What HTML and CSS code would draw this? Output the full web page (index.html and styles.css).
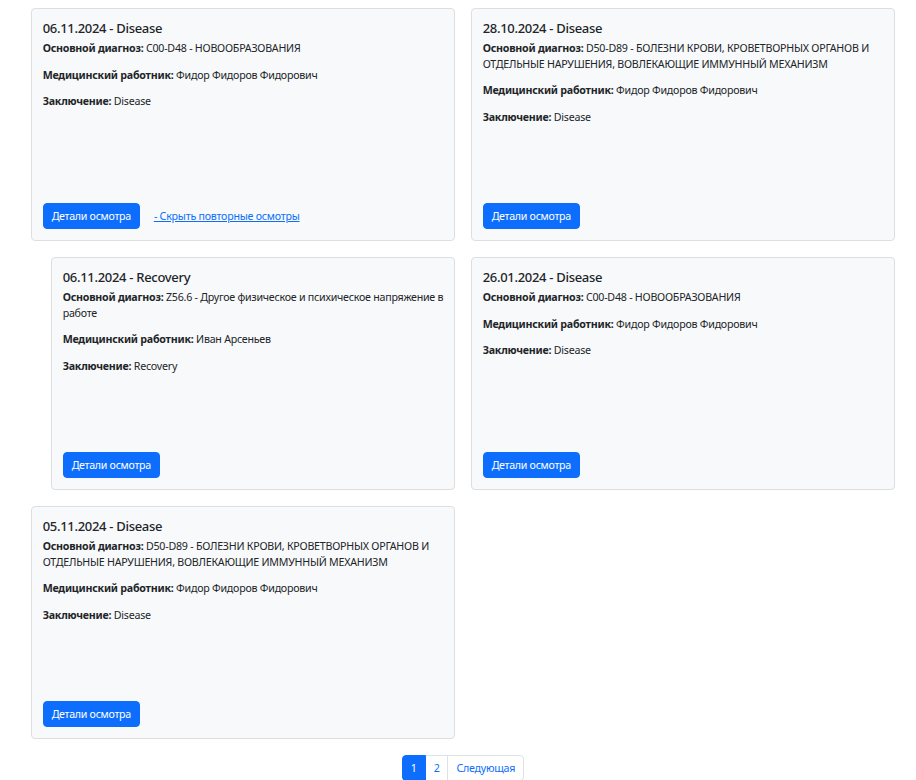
FILE: index.html
```html
<!DOCTYPE html>
<html lang="ru">
<head>
<meta charset="utf-8">
<title>Осмотры</title>
<link rel="stylesheet" href="styles.css">
</head>
<body>
<div class="page">
  <div class="grid">
    <div class="cell">
      <div class="card">
        <h5 class="card-title">06.11.2024 - Disease</h5>
        <p><strong>Основной диагноз:</strong> C00-D48 - НОВООБРАЗОВАНИЯ</p>
        <p><strong>Медицинский работник:</strong> Фидор Фидоров Фидорович</p>
        <p><strong>Заключение:</strong> Disease</p>
        <div class="card-actions">
          <a class="btn" href="#">Детали осмотра</a>
          <a class="btn-link" href="#">- Скрыть повторные осмотры</a>
        </div>
      </div>
    </div>
    <div class="cell">
      <div class="card">
        <h5 class="card-title">28.10.2024 - Disease</h5>
        <p><strong>Основной диагноз:</strong> D50-D89 - БОЛЕЗНИ КРОВИ, КРОВЕТВОРНЫХ ОРГАНОВ И ОТДЕЛЬНЫЕ НАРУШЕНИЯ, ВОВЛЕКАЮЩИЕ ИММУННЫЙ МЕХАНИЗМ</p>
        <p><strong>Медицинский работник:</strong> Фидор Фидоров Фидорович</p>
        <p><strong>Заключение:</strong> Disease</p>
        <div class="card-actions">
          <a class="btn" href="#">Детали осмотра</a>
        </div>
      </div>
    </div>
    <div class="cell nested">
      <div class="card">
        <h5 class="card-title">06.11.2024 - Recovery</h5>
        <p><strong>Основной диагноз:</strong> Z56.6 - Другое физическое и психическое напряжение в работе</p>
        <p><strong>Медицинский работник:</strong> Иван Арсеньев</p>
        <p><strong>Заключение:</strong> Recovery</p>
        <div class="card-actions">
          <a class="btn" href="#">Детали осмотра</a>
        </div>
      </div>
    </div>
    <div class="cell">
      <div class="card">
        <h5 class="card-title">26.01.2024 - Disease</h5>
        <p><strong>Основной диагноз:</strong> C00-D48 - НОВООБРАЗОВАНИЯ</p>
        <p><strong>Медицинский работник:</strong> Фидор Фидоров Фидорович</p>
        <p><strong>Заключение:</strong> Disease</p>
        <div class="card-actions">
          <a class="btn" href="#">Детали осмотра</a>
        </div>
      </div>
    </div>
    <div class="cell">
      <div class="card">
        <h5 class="card-title">05.11.2024 - Disease</h5>
        <p><strong>Основной диагноз:</strong> D50-D89 - БОЛЕЗНИ КРОВИ, КРОВЕТВОРНЫХ ОРГАНОВ И ОТДЕЛЬНЫЕ НАРУШЕНИЯ, ВОВЛЕКАЮЩИЕ ИММУННЫЙ МЕХАНИЗМ</p>
        <p><strong>Медицинский работник:</strong> Фидор Фидоров Фидорович</p>
        <p><strong>Заключение:</strong> Disease</p>
        <div class="card-actions">
          <a class="btn" href="#">Детали осмотра</a>
        </div>
      </div>
    </div>
  </div>
  <nav class="pager">
    <a class="page-item active" href="#">1</a>
    <a class="page-item" href="#">2</a>
    <a class="page-item" href="#">Следующая</a>
  </nav>
</div>
</body>
</html>
```

FILE: styles.css
```css
html, body {
  margin: 0;
  padding: 0;
  background: #ffffff;
}
body {
  font-family: "Noto Sans", "Open Sans", sans-serif;
  font-size: 10.67px;
  line-height: 1.5;
  letter-spacing: -0.24px;
  color: #212529;
}
.page {
  width: 864px;
  padding: 8px 0 0 31px;
}
.grid {
  display: grid;
  grid-template-columns: 424px 424px;
  column-gap: 16px;
  row-gap: 16px;
}
.cell.nested {
  padding-left: 20px;
}
.card {
  box-sizing: border-box;
  min-height: 233px;
  height: 100%;
  display: flex;
  flex-direction: column;
  padding: 10.67px;
  background: #f8f9fa;
  border: 1px solid #dcdee1;
  border-radius: 4px;
}
.card-title {
  margin: 1px 0 5px;
  font-size: 13px;
  font-weight: 500;
  line-height: 1.2;
  letter-spacing: -0.3px;
}
.card p {
  margin: 0 0 10.67px;
  line-height: 15.7px;
}
.card strong {
  font-weight: 700;
}
.card-actions {
  margin-top: auto;
  display: flex;
  align-items: center;
  gap: 6px;
}
.btn {
  display: inline-block;
  padding: 4px 8px;
  border: 1px solid #0d6efd;
  border-radius: 4px;
  background: #0d6efd;
  color: #ffffff;
  text-decoration: none;
  line-height: 1.5;
  letter-spacing: -0.3px;
}
.btn-link {
  display: inline-block;
  padding: 4px 8px;
  color: #0d6efd;
  text-decoration: underline;
}
.pager {
  display: flex;
  justify-content: center;
  margin-top: 16px;
}
.page-item {
  display: block;
  padding: 4px 8px;
  border: 1px solid #dee2e6;
  margin-left: -1px;
  color: #0d6efd;
  text-decoration: none;
  background: #ffffff;
}
.page-item:first-child {
  margin-left: 0;
  border-radius: 4px 0 0 4px;
}
.page-item:last-child {
  border-radius: 0 4px 4px 0;
}
.page-item.active {
  background: #0d6efd;
  border-color: #0d6efd;
  color: #ffffff;
  position: relative;
  z-index: 1;
}
```
